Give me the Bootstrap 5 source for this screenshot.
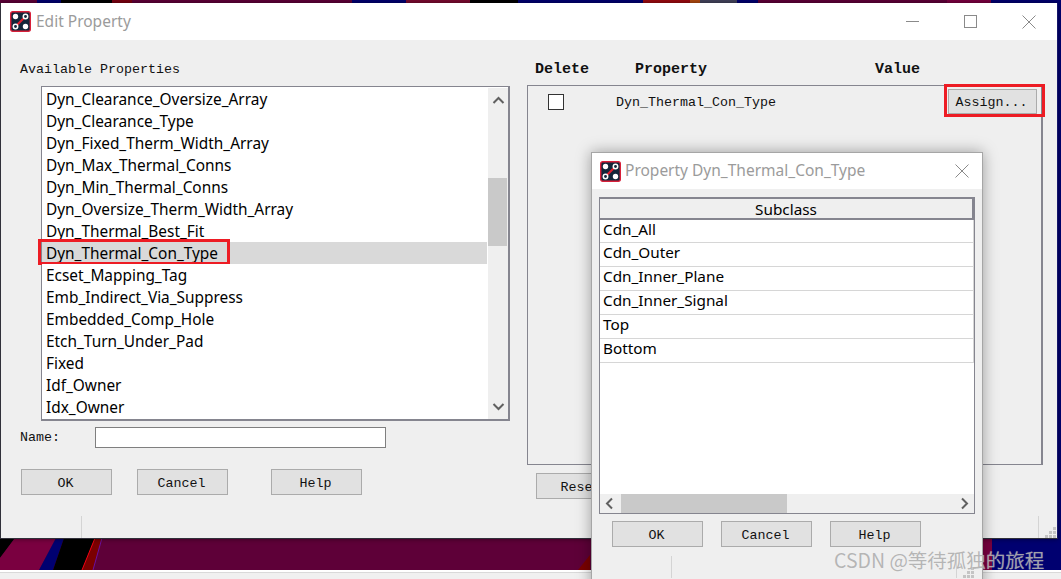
<!DOCTYPE html>
<html lang="en">
<head>
<meta charset="utf-8">
<title>Edit Property</title>
<link href="https://cdn.jsdelivr.net/npm/bootstrap@5.3.0/dist/css/bootstrap.min.css" rel="stylesheet">
<style>
html,body{margin:0;height:579px;overflow:hidden;background:#f0f0f0}
.desk{position:relative;width:1061px;height:579px;overflow:hidden;background:#f0f0f0;font-family:"Liberation Mono",monospace;font-size:13.33px;color:#111}
.art{position:absolute;left:0;top:0}
.strip-line{position:absolute;left:0;right:0;top:570px;height:2px;background:#fff}
.strip-rule{position:absolute;left:0;right:0;top:572px;height:1px;background:#d9d9d9}
.win{position:absolute;display:flex;flex-direction:column;background:#efefef}
.win-main{left:0;top:3px;width:1058px;height:536px;border-left:1px solid #30303a;border-right:1px solid #14146a;border-bottom:1px solid #30303a;box-shadow:0 0 5px rgba(0,0,0,.45)}
.win-sub{left:591px;top:152px;width:392px;height:440px;border:1px solid #a6a6a6;box-shadow:0 0 14px rgba(0,0,0,.35)}
.cap{flex:0 0 37px;height:37px;background:#fff;display:flex;align-items:center;color:#9b9b9b;font-family:"Noto Sans",sans-serif;font-size:15.5px}
.win-main .cap{padding-left:9px}
.win-sub .cap{flex-basis:36px;height:36px;padding-left:8px}
.cap-ico{width:21px;height:21px;margin-right:5px;flex:none}
.win-sub .cap-ico{margin-right:4px}
.ctl{flex:none;stroke:#8a8a8a;fill:none;stroke-width:1}
.ctl-min{margin-right:45px}.ctl-max{margin-right:45px}.ctl-x{margin-right:21px}
.ctl-x2{margin-right:13px}
.main-body{display:flex;flex:1 1 auto;min-height:0}
.col-left{width:509px;flex:none;padding:21px 0 0 19px}
.lbl{display:block;height:18px;line-height:18px;margin:0}
.plist{margin:7px 0 0 21px;width:469px;height:335px;border:1px solid #85858f;border-width:1px 2px 2px 1px;background:#fff;display:flex;padding:1px 1px 0 0}
.plist-rows{flex:0 0 446px;border-radius:0;display:block}
.plist-rows .list-group-item{height:22px;line-height:24px;padding:0 0 0 4px;border:0;border-radius:0;background:#fff;color:#000;font-family:"Noto Sans",sans-serif;font-size:15.4px;white-space:nowrap;position:relative}
.plist-rows .list-group-item.active{background:#d9d9d9;color:#000;z-index:auto;margin:0 1px 0 0}
.red-a{position:absolute;left:-4px;top:-3px;width:192px;height:26px;border:3px solid #ed1c24;pointer-events:none}
.vbar{flex:0 0 20px;height:331px;background:#efefef;display:flex;flex-direction:column;align-items:center;justify-content:space-between;padding:8px 0 8px;position:relative}
.vthumb{position:absolute;left:0;right:1px;top:90px;height:68px;background:#c9c9c9}
.name-row{display:flex;align-items:center;margin-top:6px;height:21px}
.name-row .lbl{width:75px;line-height:20px;height:20px}
.name-in{width:291px;height:21px;min-height:0;padding:0 4px;border:1px solid #7f7f7f;border-radius:0;background:#fff}
.btn-row{display:flex;margin-top:21px}
.dbtn{width:91px;height:26px;padding:0 2px 0 0;border:1px solid #ababab;border-radius:0;background:#e1e1e1;color:#111;font:13.33px/27px "Liberation Mono",monospace}
.btn-row-main{margin-left:1px}
.gap-a{margin-left:25px}.gap-b{margin-left:43px}.gap-c{margin-left:18px}
.col-right{width:516px;margin-left:17px;flex:none;padding-top:21px}
.heads{display:flex;height:18px;line-height:18px;font-size:15px;font-weight:700;padding-left:8px;margin-bottom:6px}
.h1-c{width:100px}.h2-c{width:240px}
.ppanel{height:380px;border:1px solid #85858f;border-width:1px 2px 1px 1px;padding:3px 4px 0 20px;display:flex;align-items:flex-start}
.desk .chk{width:16px;height:16px;margin:5px 0 0;border:1px solid #333;border-radius:0;flex:none}
.pname{margin:6px 0 0 52px;line-height:16px}
.btn-wrap{position:relative;margin-left:auto}
.desk .assign{width:89px;height:25px;line-height:26px}
.red-b{position:absolute;left:-4px;top:-5px;width:101px;height:33px;border:3px solid #ed1c24;pointer-events:none}
.reset{margin:8px 0 0 9px;display:block}
.sbar{flex:0 0 22px;height:22px;margin-top:auto;display:flex}
.seg-a{flex:0 0 81px;border-right:1px solid #d4d4d4}
.seg-b{flex:1 1 auto;border-right:1px solid #d4d4d4}
.seg-g{flex:0 0 18px;display:flex;align-items:flex-end;justify-content:flex-end;padding:0 1px 0 0}
.sub-body{padding:8px 7px 0;flex:1 1 auto;display:flex;flex-direction:column}
.tbl-wrap{height:317px;border:1px solid #85858f;background:#fff;display:flex;flex-direction:column;width:376px}
.sub-table{margin:0;width:100%;font-family:"Noto Sans",sans-serif;font-size:15.3px;color:#000}
.sub-table th{height:20px;padding:0 0 1px;line-height:16px;text-align:center;font-weight:400;background:#efefef;border:2px solid #85858f;border-width:1px 2px 2px 0;color:#000}
.sub-table td{height:24px;padding:0 0 0 3px;line-height:19px;background:#fff;color:#000;border:0;border-bottom:1px solid #d6d6d6;border-right:1px solid #d6d6d6}
.hbar{margin-top:auto;height:19px;background:#efefef;display:flex;align-items:center;justify-content:space-between;padding:0 5px;position:relative}
.hthumb{position:absolute;left:21px;top:0;bottom:0;width:166px;background:#c9c9c9}
.btn-row-sub{margin:7px 0 0 13px}
.win-sub .sbar{flex-basis:22px;height:22px;margin-top:9px}
.win-sub .seg-a{flex-basis:73px}
.wm{position:absolute;left:834px;top:547px;font-family:"Noto Sans CJK SC","Noto Sans",sans-serif;font-size:19.5px;line-height:26px;color:rgba(172,172,172,.88);text-shadow:0 0 1px rgba(255,255,255,.4);white-space:nowrap}
</style>
</head>
<body>
<svg width="0" height="0" class="position-absolute">
<defs>
<symbol id="cad" viewBox="0 0 21 21">
<rect x=".7" y=".7" width="19.6" height="19.6" rx="2" fill="#12263a" stroke="#d8203a" stroke-width="1.4"/>
<path d="M5.5 15.5L15.5 5.5" stroke="#e02030" stroke-width="2.2"/>
<circle cx="5.5" cy="5.5" r="2.7" fill="#fff"/>
<circle cx="15.5" cy="5.5" r="2.2" fill="#12263a" stroke="#fff" stroke-width="1.5"/>
<circle cx="5.5" cy="15.5" r="2.2" fill="#12263a" stroke="#fff" stroke-width="1.5"/>
<circle cx="15.5" cy="15.5" r="2.7" fill="#fff"/>
</symbol>
<symbol id="grip" viewBox="0 0 11 11">
<path fill="#c4c4c4" d="M8 0h3v3H8zM4 4h3v3H4zM8 4h3v3H8zM0 8h3v3H0zM4 8h3v3H4zM8 8h3v3H8z"/>
</symbol>
</defs>
</svg>
<div class="desk">
<svg class="art" width="1061" height="579" viewBox="0 0 1061 579">
<g>
<rect x="0" y="0" width="37" height="4" fill="#5e0038"/><rect x="37" y="0" width="24" height="4" fill="#000070"/><rect x="61" y="0" width="51" height="4" fill="#000"/><rect x="112" y="0" width="20" height="4" fill="#7a0010"/><rect x="132" y="0" width="220" height="4" fill="#5e0038"/><rect x="352" y="0" width="54" height="4" fill="#000070"/><rect x="406" y="0" width="64" height="4" fill="#7a0a30"/><rect x="470" y="0" width="48" height="4" fill="#000"/><rect x="518" y="0" width="125" height="4" fill="#000070"/><rect x="643" y="0" width="47" height="4" fill="#9a0a10"/><rect x="690" y="0" width="10" height="4" fill="#b04a10"/><rect x="700" y="0" width="37" height="4" fill="#44445c"/><rect x="737" y="0" width="21" height="4" fill="#000070"/><rect x="758" y="0" width="189" height="4" fill="#5e0038"/><rect x="947" y="0" width="44" height="4" fill="#7a0040"/><rect x="991" y="0" width="70" height="4" fill="#000070"/>
</g>
<rect x="0" y="538" width="1061" height="32" fill="#5e0038"/>
<polygon points="0,538 15,538 0,558" fill="#000"/>
<polygon points="15,538 56,538 39,570 0,570 0,558" fill="#7a0040"/>
<polygon points="56,538 64,538 53,570 39,570" fill="#000070"/>
<polygon points="64,538 95,538 82,570 53,570" fill="#000"/>
<polygon points="95,538 102,538 93,570 82,570" fill="#7a0000"/>
<path d="M95 538L82 570" stroke="#f00010" fill="none"/>
<path d="M102 538L93 570" stroke="#6a10a0" fill="none"/>
<polygon points="590,555 590,570 578,570" fill="#7a0000"/>
<rect x="983" y="538" width="9" height="32" fill="#7a0040"/>
<rect x="992" y="538" width="69" height="32" fill="#000070"/>
<rect x="1058" y="0" width="3" height="538" fill="#000070"/>
</svg>
<div class="strip-line"></div>
<div class="strip-rule"></div>

<section class="win win-main">
<div class="cap">
<svg class="cap-ico"><use href="#cad"/></svg>
<span class="me-auto">Edit Property</span>
<svg class="ctl ctl-min" width="13" height="13" viewBox="0 0 13 13"><path d="M0 6.5h13"/></svg>
<svg class="ctl ctl-max" width="13" height="13" viewBox="0 0 13 13"><rect x=".5" y=".5" width="12" height="12"/></svg>
<svg class="ctl ctl-x" width="14" height="14" viewBox="0 0 14 14"><path d="M.5.5l13 13M13.5.5l-13 13"/></svg>
</div>
<div class="main-body">
<div class="col-left">
<label class="lbl">Available Properties</label>
<div class="plist">
<ul class="list-group plist-rows">
<li class="list-group-item">Dyn_Clearance_Oversize_Array</li>
<li class="list-group-item">Dyn_Clearance_Type</li>
<li class="list-group-item">Dyn_Fixed_Therm_Width_Array</li>
<li class="list-group-item">Dyn_Max_Thermal_Conns</li>
<li class="list-group-item">Dyn_Min_Thermal_Conns</li>
<li class="list-group-item">Dyn_Oversize_Therm_Width_Array</li>
<li class="list-group-item">Dyn_Thermal_Best_Fit</li>
<li class="list-group-item active">Dyn_Thermal_Con_Type<span class="red-a"></span></li>
<li class="list-group-item">Ecset_Mapping_Tag</li>
<li class="list-group-item">Emb_Indirect_Via_Suppress</li>
<li class="list-group-item">Embedded_Comp_Hole</li>
<li class="list-group-item">Etch_Turn_Under_Pad</li>
<li class="list-group-item">Fixed</li>
<li class="list-group-item">Idf_Owner</li>
<li class="list-group-item">Idx_Owner</li>
</ul>
<div class="vbar">
<svg width="13" height="9" viewBox="0 0 13 9"><path d="M1.5 7L6.5 2l5 5" fill="none" stroke="#606060" stroke-width="2"/></svg>
<span class="vthumb"></span>
<svg width="13" height="9" viewBox="0 0 13 9"><path d="M1.5 2l5 5 5-5" fill="none" stroke="#606060" stroke-width="2"/></svg>
</div>
</div>
<div class="name-row">
<label class="lbl" for="nm">Name:</label>
<input id="nm" class="form-control name-in" type="text">
</div>
<div class="btn-row btn-row-main">
<button class="btn dbtn">OK</button>
<button class="btn dbtn gap-a">Cancel</button>
<button class="btn dbtn gap-b">Help</button>
</div>
</div>
<div class="col-right">
<div class="heads"><span class="h1-c">Delete</span><span class="h2-c">Property</span><span>Value</span></div>
<div class="ppanel">
<input class="form-check-input chk" type="checkbox">
<span class="pname">Dyn_Thermal_Con_Type</span>
<div class="btn-wrap"><button class="btn dbtn assign">Assign...</button><span class="red-b"></span></div>
</div>
<button class="btn dbtn reset">Reset</button>
</div>
</div>
<div class="sbar">
<div class="seg-a"></div>
<div class="seg-b"></div>
<div class="seg-g"><svg width="11" height="11"><use href="#grip"/></svg></div>
</div>
</section>

<section class="win win-sub">
<div class="cap">
<svg class="cap-ico"><use href="#cad"/></svg>
<span class="me-auto">Property Dyn_Thermal_Con_Type</span>
<svg class="ctl ctl-x2" width="14" height="14" viewBox="0 0 14 14"><path d="M.5.5l13 13M13.5.5l-13 13"/></svg>
</div>
<div class="sub-body">
<div class="tbl-wrap">
<table class="table sub-table">
<thead><tr><th>Subclass</th></tr></thead>
<tbody>
<tr><td>Cdn_All</td></tr>
<tr><td>Cdn_Outer</td></tr>
<tr><td>Cdn_Inner_Plane</td></tr>
<tr><td>Cdn_Inner_Signal</td></tr>
<tr><td>Top</td></tr>
<tr><td>Bottom</td></tr>
</tbody>
</table>
<div class="hbar">
<svg width="9" height="13" viewBox="0 0 9 13"><path d="M7 1.5l-5 5 5 5" fill="none" stroke="#606060" stroke-width="2"/></svg>
<span class="hthumb"></span>
<svg width="9" height="13" viewBox="0 0 9 13"><path d="M2 1.5l5 5-5 5" fill="none" stroke="#606060" stroke-width="2"/></svg>
</div>
</div>
<div class="btn-row btn-row-sub">
<button class="btn dbtn">OK</button>
<button class="btn dbtn gap-c">Cancel</button>
<button class="btn dbtn gap-c">Help</button>
</div>
<div class="sbar">
<div class="seg-a"></div>
<div class="seg-b"></div>
<div class="seg-g"><svg width="11" height="11"><use href="#grip"/></svg></div>
</div>
</div>
</section>
<div class="wm">CSDN @等待孤独的旅程</div>
</div>
<script src="https://cdn.jsdelivr.net/npm/bootstrap@5.3.0/dist/js/bootstrap.bundle.min.js"></script>
</body>
</html>
